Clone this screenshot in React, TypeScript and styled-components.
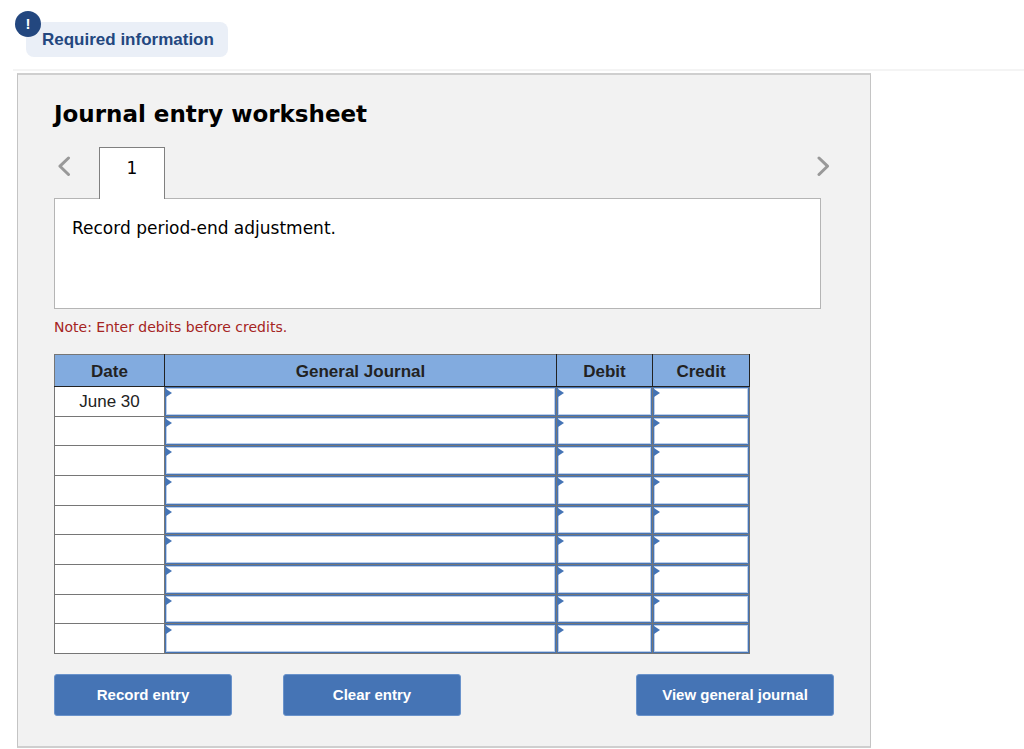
import React from "react";
import styled, { createGlobalStyle } from "styled-components";

const GlobalStyle = createGlobalStyle`
  *, *::before, *::after { box-sizing: border-box; }
  body {
    margin: 0;
    background: #fff;
    color: #000;
    font-family: "Liberation Sans", Arial, sans-serif;
  }
`;

const verdana = `"DejaVu Sans", Verdana, sans-serif`;

const Banner = styled.header`
  margin-left: 13px;
  padding: 22px 13px 12px;
  border-bottom: 2px solid #f4f4f4;
`;

const Pill = styled.div`
  position: relative;
  display: inline-block;
  vertical-align: top;
  padding: 0 14px 0 16px;
  border-radius: 8px;
  background: #eaeff7;
  color: #23477f;
  font-size: 17px;
  font-weight: bold;
  line-height: 35px;
`;

const Badge = styled.span`
  position: absolute;
  top: -11px;
  left: -11px;
  width: 26px;
  height: 26px;
  border-radius: 50%;
  background: #23477f;
  color: #fff;
  font-size: 15px;
  line-height: 26px;
  text-align: center;
`;

const Panel = styled.main`
  max-width: 854px;
  margin: 2px 16px 2px 17px;
  padding: 25px 36px 30px;
  border: 1px solid #c4c4c4;
  border-top: 2px solid #cfcfcf;
  border-bottom: 2px solid #cfcfcf;
  background: #f2f2f2;
`;

const Title = styled.h1`
  margin: 0 0 19px;
  font-family: ${verdana};
  font-size: 23px;
  line-height: 28px;
`;

const TabBar = styled.nav`
  display: flex;
  align-items: flex-start;
  gap: 24px;
`;

const ArrowButton = styled.button`
  display: flex;
  width: 21px;
  height: 38px;
  padding: 0;
  border: 0;
  background: none;
  color: #999;
  align-items: center;
  justify-content: center;
`;

const NextButton = styled(ArrowButton)`
  margin-left: auto;
`;

const Tab = styled.button`
  position: relative;
  width: 66px;
  height: 52px;
  margin-bottom: -1px;
  padding: 0 0 11px;
  border: 1px solid #808080;
  border-bottom: 0;
  background: #fff;
  color: #000;
  font-family: ${verdana};
  font-size: 17px;
`;

const Instructions = styled.section`
  min-height: 111px;
  margin-right: 13px;
  padding: 17px;
  border: 1px solid #b5b5b5;
  background: #fff;
  font-family: ${verdana};
  font-size: 17px;
  line-height: 24px;
`;

const Note = styled.p`
  margin: 8px 0 17px;
  color: #a52422;
  font-family: ${verdana};
  font-size: 14px;
  line-height: 20px;
`;

const Journal = styled.table`
  width: 100%;
  max-width: 696px;
  height: 300px;
  border-collapse: collapse;
  table-layout: fixed;
  background: #fff;
  color: #222;
  font-size: 17px;
`;

const HeadCell = styled.th<{ $width?: number }>`
  width: ${(p) => (p.$width ? `${p.$width}px` : "auto")};
  height: 32px;
  padding: 2px 0 0;
  border: 1px solid #222;
  border-top-color: #767676;
  background: #82abdf;
  &:first-child { border-left-color: #767676; }
`;

const DateCell = styled.td`
  height: 28px;
  padding: 2px 0 0;
  border: 1px solid #767676;
  text-align: center;
`;

const EntryCell = styled.td`
  position: relative;
  height: 28px;
  padding: 0;
  border: 1px solid #767676;
  &::before {
    content: "";
    position: absolute;
    top: 2px;
    left: 1px;
    border: 4px solid transparent;
    border-left: 6px solid #4574b5;
    border-right: 0;
  }
`;

const EntryInput = styled.input`
  display: block;
  width: 100%;
  height: 100%;
  padding: 0 8px;
  border: 1px solid #4574b5;
  border-radius: 0;
  outline: 0;
  background: #fff;
  box-shadow: inset 0 0 0 1px #bccee8;
  font: inherit;
`;

const Actions = styled.div`
  display: flex;
  gap: 51px;
  margin-top: 20px;
`;

const ActionButton = styled.button<{ $wide?: boolean }>`
  width: ${(p) => (p.$wide ? 198 : 178)}px;
  height: 42px;
  margin-left: ${(p) => (p.$wide ? "auto" : "0")};
  padding: 0 0 2px;
  border: 1px solid #6a93cb;
  border-radius: 3px;
  background: #4574b5;
  color: #fff;
  font-family: inherit;
  font-size: 15px;
  font-weight: bold;
`;

const Chevron = ({ points }: { points: string }) => (
  <svg width="13" height="20" viewBox="0 0 13 20" fill="none" stroke="currentColor" strokeWidth="3" strokeLinecap="round" strokeLinejoin="round" aria-hidden="true">
    <polyline points={points} />
  </svg>
);

const dates = ["June 30", "", "", "", "", "", "", "", ""];
const fields = ["General Journal", "Debit", "Credit"];

export default function App() {
  return (
    <>
      <GlobalStyle />
      <Banner>
        <Pill>
          <Badge>!</Badge>
          Required information
        </Pill>
      </Banner>
      <Panel>
        <Title>Journal entry worksheet</Title>
        <TabBar aria-label="Entries">
          <ArrowButton aria-label="Previous entry">
            <Chevron points="10.5,2 2,10.2 10.5,18.5" />
          </ArrowButton>
          <Tab>1</Tab>
          <NextButton aria-label="Next entry">
            <Chevron points="2,2 10.5,10.2 2,18.5" />
          </NextButton>
        </TabBar>
        <Instructions>Record period-end adjustment.</Instructions>
        <Note>Note: Enter debits before credits.</Note>
        <Journal>
          <thead>
            <tr>
              <HeadCell $width={110}>Date</HeadCell>
              <HeadCell>General Journal</HeadCell>
              <HeadCell $width={96}>Debit</HeadCell>
              <HeadCell $width={97}>Credit</HeadCell>
            </tr>
          </thead>
          <tbody>
            {dates.map((date, row) => (
              <tr key={row}>
                <DateCell>{date}</DateCell>
                {fields.map((field) => (
                  <EntryCell key={field}>
                    <EntryInput type="text" aria-label={`${field}, line ${row + 1}`} />
                  </EntryCell>
                ))}
              </tr>
            ))}
          </tbody>
        </Journal>
        <Actions>
          <ActionButton>Record entry</ActionButton>
          <ActionButton>Clear entry</ActionButton>
          <ActionButton $wide>View general journal</ActionButton>
        </Actions>
      </Panel>
    </>
  );
}
